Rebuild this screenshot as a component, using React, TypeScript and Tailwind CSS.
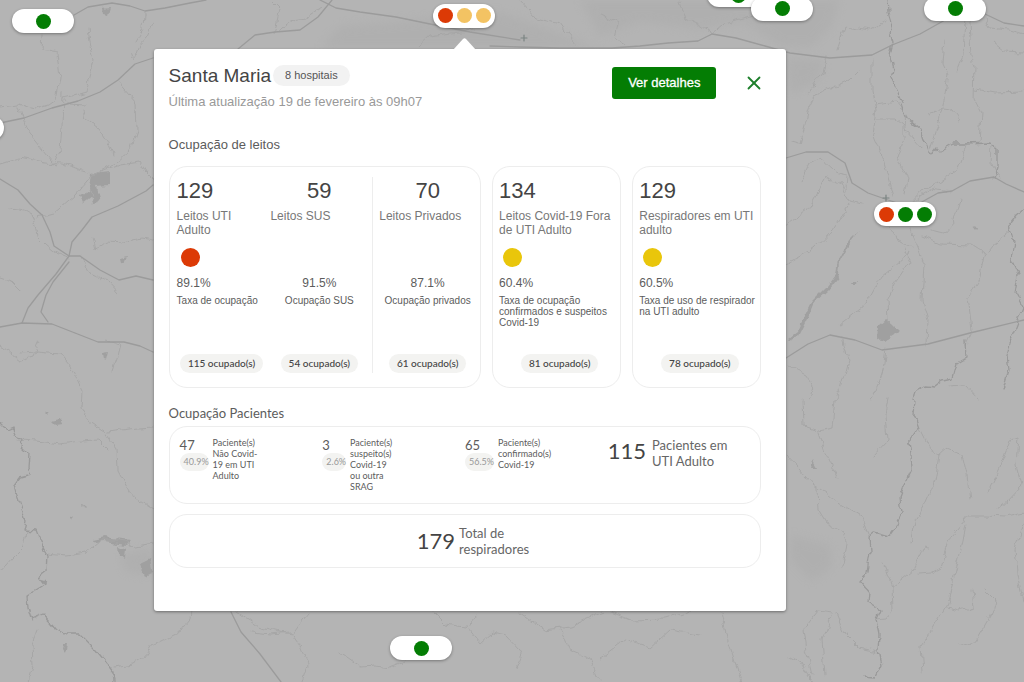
import { X } from "lucide-react";

type Status = "red" | "orange" | "green" | "yellow";

interface MapMarker {
  x: number;
  y: number;
  dots: Status[];
}

interface Bed {
  total: string;
  label: string;
  rate: string;
  caption: string;
  occupied: string;
  status?: Status;
}

interface PatientGroup {
  total: string;
  rate: string;
  label: string;
}

const DOT_COLORS: Record<Status, string> = {
  red: "bg-[#dc3a06]",
  orange: "bg-[#f3c363]",
  green: "bg-[#047d04]",
  yellow: "bg-[#e9c60b]",
};

const MARKERS: MapMarker[] = [
  { x: 43, y: 21, dots: ["green"] },
  { x: 464, y: 16, dots: ["red", "orange", "orange"] },
  { x: 738, y: -5, dots: ["green"] },
  { x: 782, y: 9, dots: ["green"] },
  { x: 955, y: 9, dots: ["green"] },
  { x: 905, y: 214, dots: ["red", "green", "green"] },
  { x: 421, y: 648, dots: ["green"] },
  { x: -27, y: 128, dots: ["green"] },
];

const UTI: Bed = {
  total: "129",
  label: "Leitos UTI Adulto",
  rate: "89.1%",
  caption: "Taxa de ocupação",
  occupied: "115 ocupado(s)",
  status: "red",
};

const SUS: Bed = {
  total: "59",
  label: "Leitos SUS",
  rate: "91.5%",
  caption: "Ocupação SUS",
  occupied: "54 ocupado(s)",
};

const PRIVATE: Bed = {
  total: "70",
  label: "Leitos Privados",
  rate: "87.1%",
  caption: "Ocupação privados",
  occupied: "61 ocupado(s)",
};

const COVID: Bed = {
  total: "134",
  label: "Leitos Covid-19 Fora de UTI Adulto",
  rate: "60.4%",
  caption: "Taxa de ocupação confirmados e suspeitos Covid-19",
  occupied: "81 ocupado(s)",
  status: "yellow",
};

const RESPIRATORS: Bed = {
  total: "129",
  label: "Respiradores em UTI adulto",
  rate: "60.5%",
  caption: "Taxa de uso de respirador na UTI adulto",
  occupied: "78 ocupado(s)",
  status: "yellow",
};

const PATIENTS: PatientGroup[] = [
  { total: "47", rate: "40.9%", label: "Paciente(s)\nNão Covid-\n19 em UTI\nAdulto" },
  { total: "3", rate: "2.6%", label: "Paciente(s)\nsuspeito(s)\nCovid-19\nou outra\nSRAG" },
  { total: "65", rate: "56.5%", label: "Paciente(s)\nconfirmado(s)\nCovid-19" },
];

const HIGHWAYS = [
  "M0 123 L24 118 L52 108 L78 101 L100 92 L118 80 L135 64 L153 58",
  "M74 15 L88 7 L112 3 L130 6 L145 11 L165 8 L190 3 L206 0",
  "M0 179 L18 190 L30 204 L42 215 L50 232 L54 246 L69 256",
  "M153 185 L146 191 L118 206 L92 217 L82 230 L72 242 L69 256 L56 274 L38 295 L28 308 L22 323",
  "M69 262 L53 282 L46 295 L41 312 L48 322",
  "M0 327 L22 323 L52 324 L75 333 L98 342 L124 342 L140 346 L153 352",
  "M69 256 L80 256 L100 270 L119 280 L136 276 L153 280",
  "M320 0 L336 8 L360 12 L396 17 L430 24 L470 32 L520 40",
  "M238 49 L255 35 L275 32 L300 30 L318 17 L332 0",
  "M490 46 L520 47 L560 48 L612 48 L640 46 L668 43 L698 41 L712 34 L736 38 L765 46 L790 53 L830 58 L872 55 L892 45 L920 34 L945 20 L960 10",
  "M985 14 L1004 23 L1024 26",
  "M786 158 L806 152 L828 152 L845 163 L852 183 L868 193 L888 200 L910 207",
  "M920 203 L938 193 L952 191 L970 181 L994 177 L1006 184 L1024 192",
  "M786 358 L808 344 L830 335 L855 340 L882 350 L928 344 L970 333 L1024 320",
  "M231 612 L241 632 L260 654 L281 682",
];

const RIVERS = [
  "M888 0 L889 12 L892 22 L890 34 L893 43 L890 56 L893 68 L891 78 L900 98 L907 118 L920 129 L925 143 L930 155 L936 147 L940 151 L952 144 L965 144 L990 143 L997 149 L997 168 L994 178",
  "M0 423 L7 430 L14 427 L16 436 L22 438 L21 447 L29 455 L28 467 L31 475 L20 478 L15 485 L19 500 L26 521 L24 530 L36 531 L42 546 L48 556 L47 570 L39 576 L45 584 L27 595 L28 607 L32 620 L44 615 L56 629 L66 634 L80 634 L95 649 L105 661 L113 672 L114 682",
  "M915 400 L914 414 L919 427 L909 442 L911 455 L912 470 L904 487 L900 497 L902 514 L894 529 L889 536 L874 532 L869 536 L870 552 L867 573 L860 581 L869 592 L868 603 L880 610 L876 619 L879 634 L878 651 L881 664 L875 677 L864 676",
  "M1024 209 L1018 214 L1009 226 L1014 242 L1011 260 L1018 275 L1015 292 L1024 308 L1016 328 L1010 343 L1007 355 L1009 370 L1003 390",
  "M965 341 L966 358 L956 364 L952 379 L943 381 L935 387 L924 386 L916 391 L914 400",
];

const ROADS = [
  "M153 24 L147 38 L138 48 L134 60 L131 52",
  "M144 12 L143 30 L136 42",
  "M270 0 L280 10 L277 22 L273 34",
  "M278 31 L293 20 L306 18 L321 8",
  "M42 34 L41 50 L57 53 L60 78 L56 100 L49 105 L36 109 L19 104 L0 106",
  "M19 106 L27 130 L43 150 L56 166",
  "M88 30 L94 60 L86 92 L64 98 L68 104 L85 105",
  "M84 110 L86 118 L99 128 L107 140 L113 154",
  "M63 92 L62 128 L60 150 L54 164",
  "M117 81 L136 103 L137 130 L130 150 L115 164 L92 176 L76 195 L54 214 L38 218",
  "M0 164 L20 158 L44 163 L62 164 L96 174 L120 165 L140 162 L146 172 L153 179",
  "M10 208 L25 210 L32 214 L37 236 L46 245 L53 251 L69 258",
  "M93 238 L96 249 L106 241 L124 242 L142 238 L153 240",
  "M80 257 L88 272 L108 281 L119 293",
  "M0 277 L12 281 L20 289",
  "M21 353 L36 352 L60 354 L72 368 L82 390 L81 410 L88 421 L105 432 L117 449 L118 470 L130 493 L153 508",
  "M18 440 L38 441 L60 444 L80 441 L99 440 L109 450",
  "M108 432 L128 429 L153 427",
  "M0 345 L12 354 L20 360 L33 356 L40 341",
  "M107 341 L120 344 L117 356 L112 370",
  "M0 572 L12 558 L24 546 L27 531",
  "M47 554 L66 556 L86 553 L100 541 L117 541 L124 542 L132 547 L153 543",
  "M114 668 L133 665 L145 657 L152 646 L180 632 L190 620 L191 611",
  "M38 630 L32 645 L33 664 L28 682",
  "M238 612 L258 626 L280 632 L293 634 L300 624 L309 613",
  "M252 632 L270 634 L291 632 L300 645 L308 665 L302 682",
  "M340 652 L362 667 L375 666 L390 668 L403 663 L410 650",
  "M433 613 L445 625 L465 628 L475 616",
  "M468 628 L480 643 L492 632 L506 635 L522 652 L515 668",
  "M520 613 L545 630 L570 627 L602 612",
  "M560 630 L570 650 L590 658 L600 682",
  "M600 658 L625 640 L650 648 L670 630 L700 635",
  "M610 612 L630 620 L665 619 L690 612",
  "M721 612 L728 640 L735 662 L742 682",
  "M786 454 L798 467 L814 485 L829 495 L838 502 L862 517 L869 534",
  "M802 400 L803 426 L818 431 L832 428 L835 400",
  "M819 432 L827 455 L838 478",
  "M817 487 L818 510 L826 523 L844 532 L847 543 L842 566",
  "M888 398 L885 414 L887 440 L873 455",
  "M919 428 L930 450 L940 455 L936 480 L925 504 L916 520 L911 543",
  "M940 455 L948 448 L962 454 L967 475 L970 500",
  "M988 492 L1000 467 L1010 441 L1018 438 L1016 465 L1022 486 L1008 501 L998 508",
  "M883 562 L892 586 L893 610 L887 618 L876 619",
  "M930 547 L924 546 L913 569 L902 578 L892 585",
  "M1024 513 L1006 517 L985 516 L968 516 L949 540 L941 568 L930 574 L917 575",
  "M966 525 L960 553 L952 585 L946 606 L940 616 L930 633 L921 646 L923 672",
  "M946 608 L960 611 L975 607 L973 590",
  "M984 589 L995 600 L990 617 L979 636 L972 646 L959 643",
  "M1024 524 L1015 548 L1017 575 L1024 602",
  "M836 612 L845 634 L859 648 L878 652",
  "M804 629 L818 611 L832 613 L822 639 L825 675",
  "M803 630 L806 651 L812 675",
  "M789 658 L804 666 L813 682",
  "M786 225 L808 210 L826 177 L842 184 L850 201 L862 204",
  "M802 179 L810 162 L820 158 L834 171 L848 174 L847 190",
  "M786 264 L815 248 L832 230 L850 204",
  "M872 60 L872 90 L876 110 L872 132 L884 162 L893 196",
  "M860 70 L850 80 L815 96 L808 110 L799 144 L792 142",
  "M827 56 L823 72 L808 94",
  "M837 52 L845 26 L870 30 L886 22",
  "M875 105 L897 102 L905 112 L906 130 L922 148",
  "M876 118 L895 118 L904 126 L904 140 L897 160 L908 178 L905 195",
  "M957 70 L963 55 L966 0",
  "M945 40 L943 64 L948 75 L944 100 L938 126 L930 150",
  "M970 22 L972 55 L975 66 L974 99 L981 112 L979 142",
  "M960 120 L952 109 L943 108 L930 114",
  "M985 18 L990 28 L1010 30 L1024 34",
  "M993 43 L1004 52 L1024 53",
  "M975 89 L995 93 L1024 92",
  "M966 145 L957 170 L940 182 L925 188 L950 192",
  "M925 188 L910 204 L934 188",
  "M992 144 L991 165 L1000 177",
  "M890 225 L900 242 L912 248",
  "M910 230 L918 248 L924 265 L922 300 L928 322 L927 344",
  "M922 236 L940 244 L972 245 L985 253",
  "M904 248 L910 261 L895 283 L887 300 L888 322",
  "M910 253 L880 277 L864 306 L840 324",
  "M1011 230 L992 246 L985 255 L980 280 L968 298 L972 330 L965 345",
  "M960 200 L954 221 L944 233 L932 230",
  "M886 350 L883 370 L878 385 L872 400",
  "M786 365 L806 375 L813 386 L809 400",
  "M842 338 L848 360 L840 390 L835 400",
  "M948 386 L965 385 L978 399",
  "M680 0 L686 18 L702 26 L713 34",
  "M600 15 L618 23 L615 38 L625 44",
  "M710 37 L725 24 L760 14",
  "M520 0 L536 18 L560 24 L575 45",
  "M418 47 L430 36 L450 33 L475 31",
];

const WOODS = [
  "M92 174 L110 172 L110 186 L96 187 L100 202 L95 203 L90 190 Z",
  "M80 196 L90 191 L92 196 L83 203 Z",
  "M878 326 L886 319 L891 322 L900 331 L892 336 L884 342 L877 340 Z",
  "M860 230 L850 243 L840 262 L839 276 L828 290 L814 303 L808 318 L799 336 L789 341 L788 339 L797 332 L805 315 L812 301 L826 287 L836 274 L838 260 L848 242 Z",
  "M852 281 L858 281 L857 283 L853 283 Z",
  "M973 225 L977 226 L976 229 Z",
  "M45 412 L48 411 L49 416 Z",
  "M51 422 L60 420 L62 425 L55 426 Z",
  "M103 355 L109 354 L107 362 L104 361 Z",
  "M91 541 L104 538 L130 541 L126 545 L104 542 L95 543 Z",
  "M118 545 L126 549 L125 560 L119 555 Z",
  "M140 565 L150 560 L153 572 L145 576 Z",
  "M82 503 L86 506 L83 509 Z",
  "M69 517 L74 515 L72 520 Z",
  "M63 643 L67 643 L65 653 L62 648 Z",
  "M813 461 L817 468 L811 468 Z",
  "M121 257 L129 255 L126 262 L122 261 Z",
  "M103 9 L111 8 L109 15 L104 14 Z",
];

function MapBackground() {
  return (
    <svg
      className="absolute inset-0 h-full w-full"
      viewBox="0 0 1024 682"
      preserveAspectRatio="xMidYMid slice"
      fill="none"
      strokeLinejoin="round"
      strokeLinecap="round"
      aria-hidden="true"
    >
      <rect width="1024" height="682" fill="#b4b4b4" />
      <defs>
        <filter id="soft">
          <feGaussianBlur stdDeviation="5" />
        </filter>
        {/* roughens the lines so that they read as rivers and roads */}
        <filter
          id="rough"
          x="0"
          y="0"
          width="1024"
          height="682"
          filterUnits="userSpaceOnUse"
          colorInterpolationFilters="sRGB"
        >
          <feTurbulence type="fractalNoise" baseFrequency="0.09" numOctaves="3" seed="4" />
          <feDisplacementMap
            in="SourceGraphic"
            scale="8"
            xChannelSelector="R"
            yChannelSelector="G"
          />
        </filter>
      </defs>
      <g fill="#a9a9a9" filter="url(#soft)" opacity="0.4">
        <path d="M580 0 H840 L832 26 L812 47 L780 46 L745 22 L700 30 L640 22 L600 36 Z" />
        <path d="M786 58 L825 60 L818 82 L790 94 Z" />
        <path d="M790 535 L830 545 L832 567 L812 582 L790 560 Z" />
        <path d="M340 26 L500 12 L600 48 H320 Z" />
        <path d="M120 555 L153 548 V576 L126 572 Z" />
      </g>
      <g filter="url(#rough)">
        {WOODS.map((d) => (
          <path key={d} d={d} fill="#a0a0a0" />
        ))}
        {ROADS.map((d) => (
          <path key={d} d={d} stroke="#a6a6a6" strokeWidth="1" />
        ))}
        {RIVERS.map((d) => (
          <path key={d} d={d} stroke="#999999" strokeWidth="1.3" />
        ))}
      </g>
      {HIGHWAYS.map((d) => (
        <path key={d} d={d} stroke="#9b9b9b" strokeWidth="1.3" />
      ))}
      <path
        d="M886 195 V201 M883 198 H889 M524 35 V41 M521 38 H527"
        stroke="#7b8482"
        strokeWidth="1.2"
      />
    </svg>
  );
}

function Marker({ x, y, dots }: MapMarker) {
  return (
    <button
      type="button"
      aria-label="Hospitais"
      className="absolute flex h-6 w-[62px] -translate-x-1/2 -translate-y-1/2 items-center justify-center gap-1 rounded-full bg-white shadow-[0_1px_3px_rgba(0,0,0,0.35)]"
      style={{ left: `${(x / 1024) * 100}%`, top: `${(y / 682) * 100}%` }}
    >
      {dots.map((dot, i) => (
        <span key={i} className={`h-[15px] w-[15px] rounded-full ${DOT_COLORS[dot]}`} />
      ))}
    </button>
  );
}

function OccupiedBadge({ text }: { text: string }) {
  return (
    <span className="mt-auto self-center whitespace-nowrap rounded-full bg-[#f3f3f1] px-2 font-[Lato,sans-serif] text-[10px] font-medium leading-[19px] text-[#444]">
      {text}
    </span>
  );
}

function BedColumn({ bed, centered = false }: { bed: Bed; centered?: boolean }) {
  const align = centered ? "text-center" : "";

  return (
    <div className="flex h-full flex-col">
      <p className={`text-[22px] leading-7 text-[#444] ${align}`}>{bed.total}</p>
      <p
        className={`mt-1 min-h-7 text-[12px] leading-[14px] text-[#777] ${centered ? "pl-1" : ""}`}
      >
        {bed.label}
      </p>
      <div className="mt-[11px] h-[19px] pl-1">
        {bed.status && (
          <span className={`block h-[19px] w-[19px] rounded-full ${DOT_COLORS[bed.status]}`} />
        )}
      </div>
      <p className={`mt-2 text-[12px] leading-4 text-[#5c5c5c] ${align}`}>{bed.rate}</p>
      <p className={`mt-1 text-[10px] leading-[11px] text-[#5c5c5c] ${align}`}>{bed.caption}</p>
      <OccupiedBadge text={bed.occupied} />
    </div>
  );
}

export default function App() {
  return (
    <main className="relative min-h-screen overflow-hidden bg-[#b4b4b4] pb-[71px] pl-[15%] pr-[23.2%] pt-[49px] font-['Liberation_Sans',Arial,sans-serif]">
      <MapBackground />
      {MARKERS.map((m) => (
        <Marker key={`${m.x}-${m.y}`} {...m} />
      ))}

      <section
        aria-label="Santa Maria"
        className="relative rounded-[3px] bg-white pb-[43px] pl-[15px] pr-[25px] pt-4 shadow-[0_1px_3px_rgba(0,0,0,0.4)]"
      >
        <svg className="absolute -top-[11px] left-[299px] h-3 w-[23px]" viewBox="0 0 23 12" aria-hidden="true">
          <path d="M0 12 L10 1 Q11.500 -0.500 13 1 L23 12 Z" fill="#fff" />
        </svg>

        <header className="flex items-start justify-between">
          <div>
            <div className="flex items-center gap-0.5">
              <h1 className="text-[19px] leading-[21px] text-[#444]">Santa Maria</h1>
              <span className="rounded-full bg-[#f2f2f2] px-3 text-[11px] leading-[21px] text-[#555]">
                8 hospitais
              </span>
            </div>
            <p className="mt-2 text-[13px] leading-4 text-[#999]">
              Última atualização 19 de fevereiro às 09h07
            </p>
          </div>
          <div className="-mr-1 flex items-center gap-[27px] pt-0.5">
            <button
              type="button"
              className="rounded-[3px] bg-[#047d04] px-4 text-[13px] leading-8 text-white [-webkit-text-stroke:0.3px_white]"
            >
              Ver detalhes
            </button>
            <button type="button" aria-label="Fechar" className="text-[#1d7f2b]">
              <X size={22} strokeWidth={2} />
            </button>
          </div>
        </header>

        <h2 className="mt-[27px] text-[13px] leading-4 text-[#5c5c5c]">Ocupação de leitos</h2>

        <div className="mt-[13px] grid h-[222px] grid-cols-[312fr_129fr_129fr] gap-[11px]">
          <div className="grid grid-cols-[97fr_107fr_107fr] rounded-[18px] border border-[#ededed] pb-3.5 pt-2.5">
            <div className="pl-[7px]">
              <BedColumn bed={UTI} />
            </div>
            <div className="border-r border-[#ededed]">
              <BedColumn bed={SUS} centered />
            </div>
            <div className="pl-0.5">
              <BedColumn bed={PRIVATE} centered />
            </div>
          </div>
          <div className="rounded-[18px] border border-[#ededed] pb-3.5 pl-1.5 pt-2.5">
            <BedColumn bed={COVID} />
          </div>
          <div className="rounded-[18px] border border-[#ededed] pb-3.5 pl-1.5 pt-2.5">
            <BedColumn bed={RESPIRATORS} />
          </div>
        </div>

        <div className="font-[Lato,sans-serif]">
          <h2 className="mt-[17px] text-[13px] leading-4 text-[#5c5c5c]">Ocupação Pacientes</h2>

          <div className="mt-[5px] grid h-[78px] grid-cols-4 rounded-[18px] border border-[#ededed] px-2.5 pt-2.5">
            {PATIENTS.map((p) => (
              <div key={p.total} className="flex items-start gap-1">
                <div>
                  <p className="text-[13px] leading-4 text-[#5c5c5c]">{p.total}</p>
                  <p className="rounded-full bg-[#f3f3f1] pl-1 text-[9px] leading-[18px] text-[#999]">
                    {p.rate}
                  </p>
                </div>
                <p className="whitespace-pre text-[9px] leading-[11px] text-[#5c5c5c]">{p.label}</p>
              </div>
            ))}
            <div className="flex items-start gap-1.5">
              <p className="text-[22px] leading-7 text-[#444]">115</p>
              <p className="whitespace-nowrap text-[13px] leading-4 text-[#666]">
                Pacientes em
                <br />
                UTI Adulto
              </p>
            </div>
          </div>

          <div className="mt-2.5 flex h-[54px] items-center justify-center gap-1 rounded-[18px] border border-[#ededed] pl-4">
            <p className="text-[22px] leading-7 text-[#444]">179</p>
            <p className="text-[13px] leading-4 text-[#666]">
              Total de
              <br />
              respiradores
            </p>
          </div>
        </div>
      </section>
    </main>
  );
}
